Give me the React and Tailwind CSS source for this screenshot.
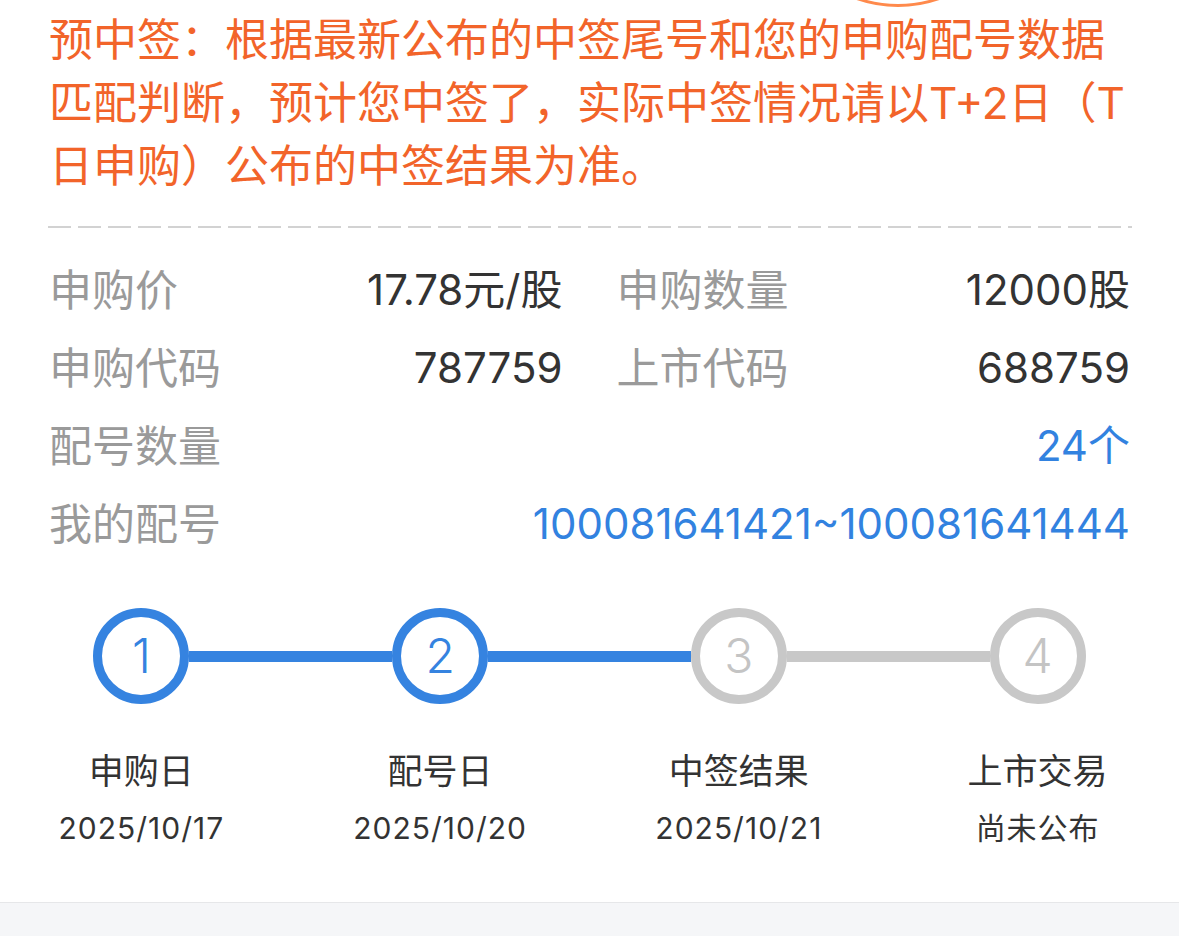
import React from 'react';

const FONT = { fontFamily: 'Inter, "Noto Sans CJK SC", sans-serif' };

const infoPairs = [
  [
    { label: '申购价', value: '17.78元/股' },
    { label: '申购数量', value: '12000股' },
  ],
  [
    { label: '申购代码', value: '787759' },
    { label: '上市代码', value: '688759' },
  ],
];

const steps = [
  { n: 1, title: '申购日', sub: '2025/10/17', done: true, left: 'none', right: 'blue' },
  { n: 2, title: '配号日', sub: '2025/10/20', done: true, left: 'blue', right: 'blue' },
  { n: 3, title: '中签结果', sub: '2025/10/21', done: false, left: 'blue', right: 'gray' },
  { n: 4, title: '上市交易', sub: '尚未公布', done: false, left: 'gray', right: 'none' },
];

const lineCls = {
  none: 'bg-transparent',
  blue: 'bg-[#3583e0]',
  gray: 'bg-[#c8c8c8]',
};

function Step({ step }) {
  return (
    <div className="flex flex-col items-center">
      <div className="flex w-full items-center">
        <div className={`h-[11px] flex-1 ${lineCls[step.left]}`} />
        <div
          className={`flex h-[96px] w-[96px] shrink-0 items-center justify-center rounded-full border-[9px] text-[48px] font-light leading-none ${
            step.done ? 'border-[#3583e0] text-[#3583e0]' : 'border-[#c8c8c8] text-[#c4c4c4]'
          }`}
        >
          {step.n}
        </div>
        <div className={`h-[11px] flex-1 ${lineCls[step.right]}`} />
      </div>
      <div className="mt-[43px] text-[35px] leading-[48px] text-[#333]">{step.title}</div>
      <div className="mt-[13px] text-[30px] leading-[40px] tracking-[1px] text-[#333]">{step.sub}</div>
    </div>
  );
}

export default function App() {
  return (
    <div className="relative flex h-[936px] w-full flex-col overflow-hidden bg-white" style={FONT}>
      {/* stamp edge peeking in from the top */}
      <div className="absolute left-[772px] top-[-245px] h-[252px] w-[252px] rounded-full border-[3px] border-[#ff8a4c]" />

      <div className="px-[48px]">
        <p className="pl-[1px] pt-[9px] text-[44px] leading-[63px] text-[#f2642a]">
          预中签：根据最新公布的中签尾号和您的申购配号数据匹配判断，预计您中签了，实际中签情况请以T+2日（T日申购）公布的中签结果为准。
        </p>

        <div className="mt-[28px] h-[2px] w-[1084px] bg-[linear-gradient(to_right,#d2d2d2_23px,transparent_23px)] bg-[length:30px_2px]" />

        <div className="mt-[23px] pl-[1px] pr-[1px]">
          {infoPairs.map((row, i) => (
            <div key={i} className="grid grid-cols-2 gap-[54px]">
              {row.map((item) => (
                <div key={item.label} className="flex items-center justify-between leading-[78px]">
                  <span className="text-[43px] text-[#9a9a9a]">{item.label}</span>
                  <span className="text-[42px] text-[#333]">{item.value}</span>
                </div>
              ))}
            </div>
          ))}
          <div className="flex items-center justify-between leading-[78px]">
            <span className="text-[43px] text-[#9a9a9a]">配号数量</span>
            <span className="text-[42px] text-[#3282e0]">24个</span>
          </div>
          <div className="flex items-center justify-between leading-[78px]">
            <span className="text-[43px] text-[#9a9a9a]">我的配号</span>
            <span className="text-[42px] text-[#3282e0]">100081641421~100081641444</span>
          </div>
        </div>
      </div>

      <div className="-mx-2 mt-[45px] grid grid-cols-4">
        {steps.map((s) => (
          <Step key={s.n} step={s} />
        ))}
      </div>

      <div className="mt-[54px] flex-1 border-t border-[#e6e7e9] bg-[#f5f6f8]" />
    </div>
  );
}
